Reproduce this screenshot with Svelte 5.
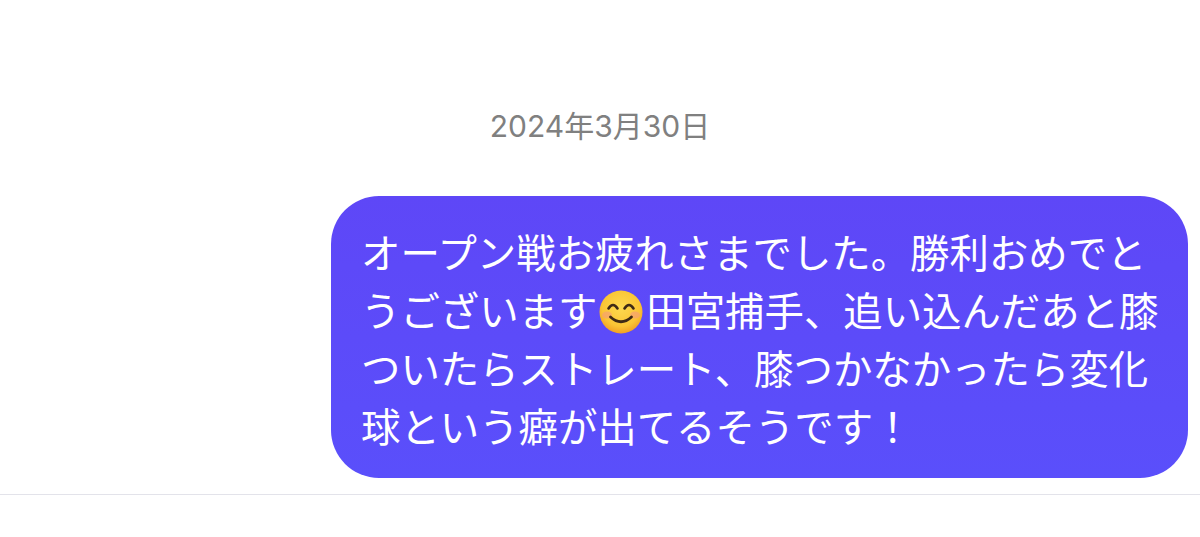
<script>
  const date = "2024年3月30日";
</script>

<div class="thread">
  <div class="date">{date}</div>
  <div class="row">
    <div class="bubble">
      オープン戦お疲れさまでした。勝利おめでと<br />うございます<svg class="emoji" viewBox="0 0 44 44" role="img" aria-label="smile">
        <defs>
          <radialGradient id="face" cx="50%" cy="40%" r="60%">
            <stop offset="0%" stop-color="#fdd950" />
            <stop offset="72%" stop-color="#fbc535" />
            <stop offset="100%" stop-color="#f2a024" />
          </radialGradient>
        </defs>
        <circle cx="22" cy="22" r="21.5" fill="url(#face)" />
        <ellipse cx="8" cy="25" rx="5" ry="3.6" fill="#f59a7c" opacity="0.6" />
        <ellipse cx="36" cy="25" rx="5" ry="3.6" fill="#f59a7c" opacity="0.6" />
        <path d="M9.5 18.5 Q14 11.5 18.5 18.5 M25.5 18.5 Q30 11.5 34.5 18.5" fill="none" stroke="#3f2a16" stroke-width="2.6" stroke-linecap="round" />
        <path d="M11.5 27 Q22 36.5 32.5 27" fill="none" stroke="#3f2a16" stroke-width="2.8" stroke-linecap="round" />
      </svg>田宮捕手、追い込んだあと膝<br />ついたらストレート、膝つかなかったら変化<br />球という癖が出てるそうです！
    </div>
  </div>
  <div class="divider"></div>
</div>

<style>
  :global(body) {
    background: #fff;
  }

  .thread {
    display: flex;
    flex-direction: column;
    padding-top: 106px;
    font-family: "Liberation Sans", "Noto Sans CJK JP", sans-serif;
  }

  .date {
    width: 1200px;
    text-align: center;
    font-family: "Inter", "Noto Sans CJK JP", sans-serif;
    font-size: 30px;
    line-height: 40px;
    color: #808080;
  }

  .row {
    display: flex;
    justify-content: flex-end;
    padding: 50px 12px 0 0;
  }

  .bubble {
    box-sizing: border-box;
    width: 857px;
    height: 282px;
    padding: 26px 20px 0 30px;
    border-radius: 48px;
    background: linear-gradient(180deg, #5e47f7, #5a4ffb);
    color: #fff;
    font-family: "Noto Sans CJK JP", sans-serif;
    font-size: 39.4px;
    line-height: 58px;
    white-space: nowrap;
  }

  .emoji {
    width: 44px;
    height: 44px;
    margin: 0 3px 0 2px;
    vertical-align: -8px;
  }

  .divider {
    margin-top: 16px;
    height: 1px;
    background: #e3e3ea;
  }
</style>
